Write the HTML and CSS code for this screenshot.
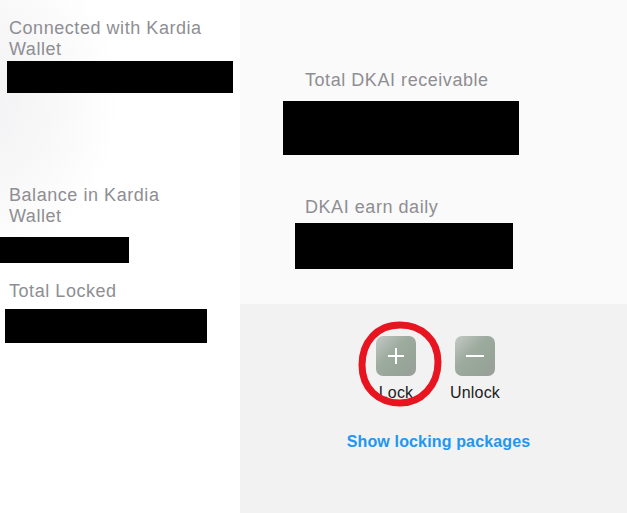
FILE: index.html
```html
<!DOCTYPE html>
<html>
<head>
<meta charset="utf-8">
<link rel="stylesheet" href="styles.css">
</head>
<body>
<div class="page">
  <section class="left">
    <div class="label first">Connected with Kardia<br>Wallet</div>
    <div class="redact r-address"></div>
    <div class="label balance">Balance in Kardia<br>Wallet</div>
    <div class="redact r-balance"></div>
    <div class="label locked">Total Locked</div>
    <div class="redact r-locked"></div>
  </section>
  <section class="right">
    <div class="stats">
      <div class="label receivable">Total DKAI receivable</div>
      <div class="redact r-receivable"></div>
      <div class="label daily">DKAI earn daily</div>
      <div class="redact r-daily"></div>
    </div>
    <div class="actions">
      <div class="buttons">
        <div class="action">
          <div class="btn">
            <svg width="20" height="20" viewBox="0 0 20 20"><path d="M10 2V18M2 10H18" stroke="#fff" stroke-width="2" fill="none"/></svg>
          </div>
          <span class="action-label">Lock</span>
          <svg class="circle" width="90" height="92" viewBox="0 0 90 92"><path d="M45 7 C67 7 83 22 83 44 C83 68 66 85 45 85 C23 85 7 70 7 47 C7 24 22 7 45 7 Z" fill="none" stroke="#e8141f" stroke-width="7"/></svg>
        </div>
        <div class="action">
          <div class="btn">
            <svg width="20" height="20" viewBox="0 0 20 20"><path d="M1 10H19" stroke="#fff" stroke-width="2" fill="none"/></svg>
          </div>
          <span class="action-label">Unlock</span>
        </div>
      </div>
      <a class="packages">Show locking packages</a>
    </div>
  </section>
</div>
</body>
</html>
```

FILE: styles.css
```css
html, body {
  margin: 0;
  padding: 0;
}
body {
  width: 627px;
  height: 513px;
  overflow: hidden;
  font-family: "Liberation Sans", Arial, sans-serif;
}
.page {
  display: flex;
  height: 513px;
}
.left {
  width: 240px;
  flex: none;
  background: radial-gradient(ellipse 150px 170px at -30px 100px, #f1f1f3 0%, #f8f8f9 55%, #ffffff 100%);
  display: flex;
  flex-direction: column;
  align-items: flex-start;
}
.label {
  font-size: 18px;
  line-height: 21px;
  color: #8e8e93;
  letter-spacing: 0.55px;
}
.redact {
  background: #000;
}
.first { margin: 18px 0 0 9px; }
.r-address { margin: 1px 0 0 7px; width: 226px; height: 32px; }
.balance { margin: 92px 0 0 9px; }
.r-balance { margin: 10px 0 0 0; width: 129px; height: 26px; }
.locked { margin: 18px 0 0 9px; }
.r-locked { margin: 7px 0 0 5px; width: 202px; height: 34px; }

.right {
  flex: 1;
  display: flex;
  flex-direction: column;
}
.stats {
  height: 304px;
  background: #fafafa;
  display: flex;
  flex-direction: column;
  align-items: flex-start;
}
.receivable { margin: 70px 0 0 65px; }
.r-receivable { margin: 10px 0 0 43px; width: 236px; height: 54px; }
.daily { margin: 42px 0 0 65px; }
.r-daily { margin: 5px 0 0 55px; width: 218px; height: 46px; }

.actions {
  flex: 1;
  background: #f2f2f2;
  display: flex;
  flex-direction: column;
  align-items: center;
  padding-top: 32px;
}
.buttons {
  display: flex;
  gap: 39px;
  margin-left: 4px;
}
.action {
  position: relative;
  width: 40px;
  display: flex;
  flex-direction: column;
  align-items: center;
}
.btn {
  width: 40px;
  height: 40px;
  border-radius: 7px;
  background: linear-gradient(135deg, #c4cac6 0%, #9eab9f 40%, #97a598 70%, #9a9e9b 100%);
  display: flex;
  align-items: center;
  justify-content: center;
}
.action-label {
  margin-top: 8px;
  font-size: 16px;
  line-height: 18px;
  color: #1c1c1e;
  white-space: nowrap;
  letter-spacing: 0.2px;
}
.circle {
  position: absolute;
  left: -21px;
  top: -18px;
}
.packages {
  margin-top: 30px;
  margin-left: 10px;
  font-size: 16px;
  line-height: 19px;
  font-weight: bold;
  color: #2196f3;
  letter-spacing: 0.15px;
}
```
